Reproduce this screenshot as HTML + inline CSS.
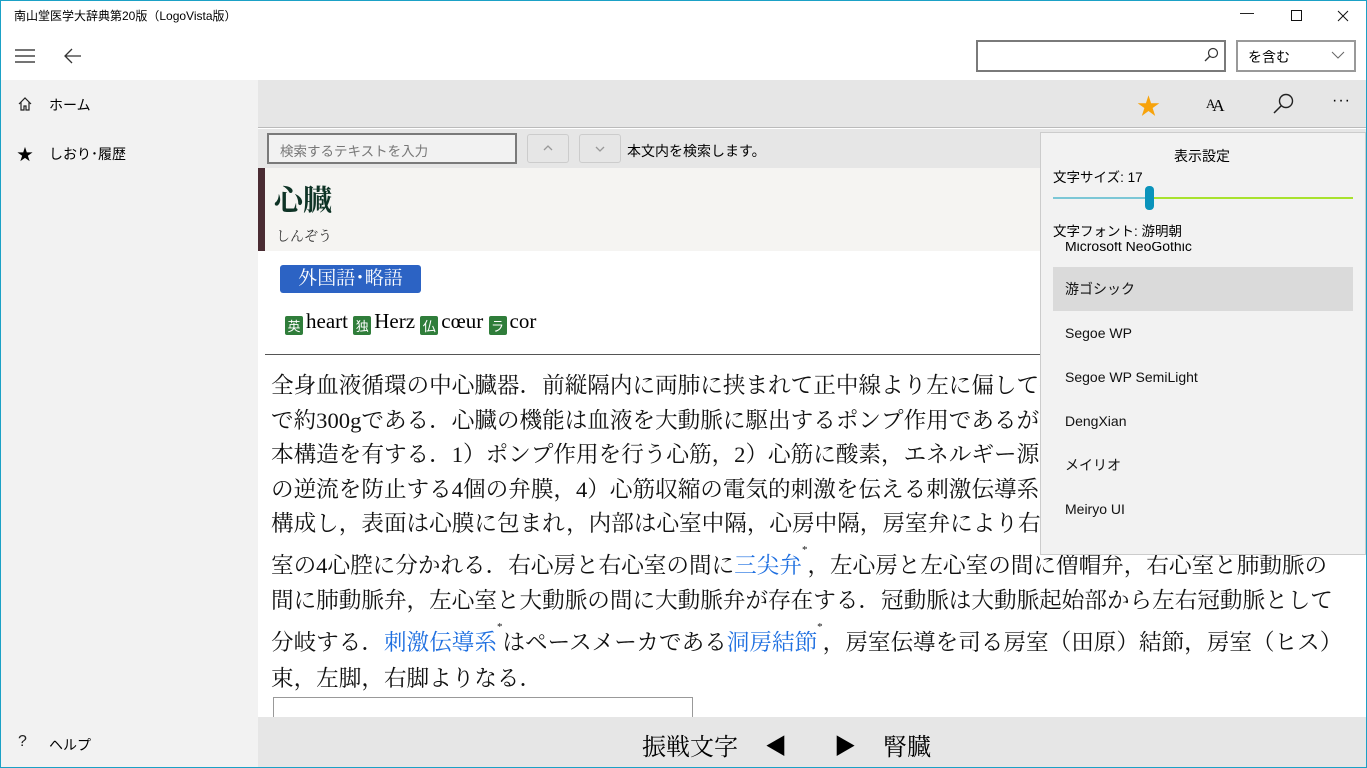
<!DOCTYPE html>
<html><head><meta charset="utf-8"><style>
*{margin:0;padding:0;box-sizing:border-box}
body{width:1367px;height:768px;overflow:hidden;background:#fff;font-family:"Liberation Sans","Noto Sans CJK JP",sans-serif;position:relative;color:#000}
.abs{position:absolute}
.serif{font-family:"Liberation Serif","Noto Serif CJK JP",serif}
.line{position:absolute;left:271px;white-space:nowrap;font-size:22.6px;font-family:"Liberation Serif","Noto Serif CJK JP",serif;color:#111}
.lk{color:#1e6fe0}
sup{font-size:11px;vertical-align:top;position:relative;top:-4px}
.tag{display:inline-block;background:#2f7d3a;color:#fff;font-size:13px;width:18px;height:19px;line-height:19px;text-align:center;border-radius:2px;vertical-align:-3px;font-family:"Noto Sans CJK JP",sans-serif;margin-right:3px}
.fi{position:absolute;left:1053px;width:300px;height:44px;line-height:44px;padding-left:12px;font-size:14px;color:#111}
</style></head><body>
<div class="abs" style="left:0;top:0;width:1367px;height:768px;border:1px solid #1ba1c6;z-index:50;pointer-events:none"></div>
<div class="abs" style="left:14px;top:7px;font-size:12px">南山堂医学大辞典第20版（LogoVista版）</div>
<div class="abs" style="left:1240px;top:4px;font-size:14px;color:#111">—</div>
<svg class="abs" style="left:1291px;top:10px" width="12" height="12"><rect x="0.5" y="0.5" width="10" height="10" fill="none" stroke="#111"/></svg>
<svg class="abs" style="left:1337px;top:10px" width="12" height="12"><path d="M1 1L11 11M11 1L1 11" stroke="#111"/></svg>
<svg class="abs" style="left:14px;top:48px" width="22" height="16"><path d="M1 2H21M1 8H21M1 14H21" stroke="#222" stroke-width="1.3"/></svg>
<svg class="abs" style="left:63px;top:47px" width="20" height="18"><path d="M18 9H2M9 2L2 9L9 16" stroke="#333" stroke-width="1.3" fill="none"/></svg>
<div class="abs" style="left:976px;top:40px;width:250px;height:32px;border:2px solid #7a7a7a"></div>
<svg class="abs" style="left:1203px;top:47px" width="16" height="16"><circle cx="10" cy="6" r="4.5" fill="none" stroke="#333" stroke-width="1.2"/><path d="M7 9L2 14" stroke="#333" stroke-width="1.3"/></svg>
<div class="abs" style="left:1236px;top:40px;width:120px;height:32px;border:2px solid #999;font-size:14px;padding:5px 0 0 10px">を含む</div>
<svg class="abs" style="left:1331px;top:50px" width="14" height="10"><path d="M1 2L7 8L13 2" stroke="#666" fill="none"/></svg>
<div class="abs" style="left:0;top:80px;width:258px;height:688px;background:#f2f2f2"></div>
<svg class="abs" style="left:17px;top:96px" width="16" height="16"><path d="M2 8L8 2L14 8M4 6V14H7V10H9V14H12V6" stroke="#222" fill="none" stroke-width="1.2"/></svg>
<div class="abs" style="left:49px;top:95px;font-size:14px">ホーム</div>
<div class="abs" style="left:17px;top:141px;font-size:16px">★</div>
<div class="abs" style="left:49px;top:144px;font-size:14px">しおり･履歴</div>
<div class="abs" style="left:18px;top:733px;font-size:16px;color:#222">?</div>
<div class="abs" style="left:49px;top:735px;font-size:14px">ヘルプ</div>
<div class="abs" style="left:258px;top:80px;width:1109px;height:48px;background:#e6e6e6;border-bottom:1px solid #bbb"></div>
<div class="abs" style="left:1137px;top:87px;font-size:23px;color:#f7a30c">★</div>
<div class="abs serif" style="left:1206px;top:93px;font-size:14px"><span style="font-size:13px">A</span><span style="font-size:17px;position:relative;top:3px;left:-3px">A</span></div>
<svg class="abs" style="left:1272px;top:92px" width="24" height="24"><circle cx="14" cy="9" r="6.5" fill="none" stroke="#222" stroke-width="1.4"/><path d="M9.5 13.5L2 21" stroke="#222" stroke-width="1.5"/></svg>
<div class="abs" style="left:1332px;top:92px;font-size:16px;letter-spacing:1px">···</div>
<div class="abs" style="left:258px;top:129px;width:1109px;height:39px;background:#e6e6e6"></div>
<div class="abs" style="left:267px;top:133px;width:250px;height:31px;border:2px solid #7a7a7a;background:#f2f2f2;font-size:13.5px;color:#777;padding:5px 0 0 11px">検索するテキストを入力</div>
<div class="abs" style="left:527px;top:134px;width:42px;height:29px;border:1px solid #ccc;border-radius:3px"></div>
<svg class="abs" style="left:543px;top:144px" width="10" height="8"><path d="M1 6L5 2L9 6" stroke="#999" fill="none" stroke-width="1.3"/></svg>
<div class="abs" style="left:579px;top:134px;width:42px;height:29px;border:1px solid #ccc;border-radius:3px"></div>
<svg class="abs" style="left:595px;top:145px" width="10" height="8"><path d="M1 2L5 6L9 2" stroke="#999" fill="none" stroke-width="1.3"/></svg>
<div class="abs" style="left:627px;top:141px;font-size:14px">本文内を検索します。</div>
<div class="abs" style="left:258px;top:168px;width:1109px;height:83px;background:#f5f4f2"></div>
<div class="abs" style="left:258px;top:168px;width:7px;height:83px;background:#4a2c33"></div>
<div class="abs serif" style="left:274px;top:178px;font-size:29px;font-weight:bold;color:#0e3326">心臓</div>
<div class="abs serif" style="left:276px;top:226px;font-size:14px;color:#333">しんぞう</div>
<div class="abs serif" style="left:280px;top:265px;width:141px;height:28px;background:#2c63c4;border-radius:3px;color:#fff;font-size:19px;text-align:center;line-height:28px">外国語･略語</div>
<div class="abs serif" style="left:285px;top:309px;font-size:21px;white-space:nowrap"><span class="tag">英</span>heart <span class="tag">独</span>Herz <span class="tag">仏</span>cœur <span class="tag">ラ</span>cor</div>
<div class="abs" style="left:265px;top:354px;width:1102px;height:1px;background:#555"></div>
<div class="line" style="top:368px">全身血液循環の中心臓器．前縦隔内に両肺に挟まれて正中線より左に偏して位置する．成人で重量は</div>
<div class="line" style="top:403px">で約300gである．心臓の機能は血液を大動脈に駆出するポンプ作用であるが，その機能を支える基</div>
<div class="line" style="top:437px">本構造を有する．1）ポンプ作用を行う心筋，2）心筋に酸素，エネルギー源を供給する冠動脈，3）血液</div>
<div class="line" style="top:472px">の逆流を防止する4個の弁膜，4）心筋収縮の電気的刺激を伝える刺激伝導系，などが心臓の構造を</div>
<div class="line" style="top:506px">構成し，表面は心膜に包まれ，内部は心室中隔，心房中隔，房室弁により右心房，右心室，左心房，左心</div>
<div class="line" style="top:548px">室の4心腔に分かれる．右心房と右心室の間に<span class="lk">三尖弁</span><sup>*</sup>，左心房と左心室の間に僧帽弁，右心室と肺動脈の</div>
<div class="line" style="top:583px">間に肺動脈弁，左心室と大動脈の間に大動脈弁が存在する．冠動脈は大動脈起始部から左右冠動脈として</div>
<div class="line" style="top:625px">分岐する．<span class="lk">刺激伝導系</span><sup>*</sup>はペースメーカである<span class="lk">洞房結節</span><sup>*</sup>，房室伝導を司る房室（田原）結節，房室（ヒス）</div>
<div class="line" style="top:661px">束，左脚，右脚よりなる．</div>
<div class="abs" style="left:273px;top:697px;width:420px;height:30px;border:1px solid #999"></div>
<div class="abs" style="left:258px;top:717px;width:1109px;height:51px;background:#e6e6e6"></div>
<div class="abs serif" style="left:642px;top:727px;font-size:24px;white-space:nowrap">振戦文字</div>
<div class="abs" style="left:765px;top:729px;font-size:22px">◀</div>
<div class="abs" style="left:834px;top:729px;font-size:22px">▶</div>
<div class="abs serif" style="left:883px;top:727px;font-size:24px;white-space:nowrap">腎臓</div>
<div class="abs" style="left:1040px;top:132px;width:326px;height:423px;background:#f2f2f2;border:1px solid #ccc;z-index:5">
</div>
<div style="position:absolute;z-index:6;left:0;top:0">
<div class="abs" style="left:1174px;top:146px;font-size:14px;white-space:nowrap">表示設定</div>
<div class="abs" style="left:1053px;top:166px;font-size:13.5px;white-space:nowrap">文字サイズ: 17</div>
<div class="abs" style="left:1053px;top:197px;width:97px;height:2px;background:#7cc7d6"></div>
<div class="abs" style="left:1150px;top:197px;width:203px;height:2px;background:#a8e22e"></div>
<div class="abs" style="left:1145px;top:186px;width:9px;height:24px;background:#0a93bb;border-radius:4px"></div>
<div class="abs" style="left:1053px;top:220px;font-size:13.5px;white-space:nowrap">文字フォント: 游明朝</div>
<div class="abs" style="left:1053px;top:242px;width:300px;height:12px;overflow:hidden"><div style="font-size:14px;padding-left:12px;margin-top:-4px">Microsoft NeoGothic</div></div>
<div class="fi" style="top:267px;background:#dadada">游ゴシック</div>
<div class="fi" style="top:311px">Segoe WP</div>
<div class="fi" style="top:355px">Segoe WP SemiLight</div>
<div class="fi" style="top:399px">DengXian</div>
<div class="fi" style="top:443px">メイリオ</div>
<div class="fi" style="top:487px">Meiryo UI</div>
</div>
</body></html>
